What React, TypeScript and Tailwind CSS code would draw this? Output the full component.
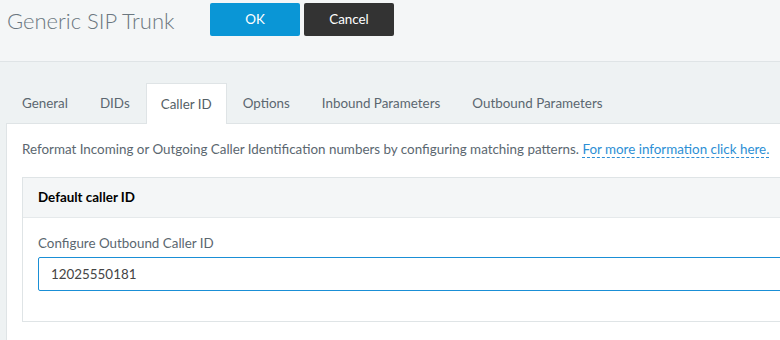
const tabs = ["General", "DIDs", "Caller ID", "Options", "Inbound Parameters", "Outbound Parameters"];

export default function App() {
  return (
    <div className="w-[780px] h-[340px] overflow-hidden bg-[#eef2f3] text-[#5b6770]" style={{ fontFamily: "Lato, 'Open Sans', sans-serif" }}>
      {/* header */}
      <div className="h-[62px] bg-[#f4f6f7] border-b border-[#dfe4e6] flex items-start">
        <h1 className="ml-[7px] mt-[4px] text-[22px] font-light text-[#6b7780] w-[203px] whitespace-nowrap">Generic SIP Trunk</h1>
        <button className="mt-[3px] w-[90px] h-[33px] rounded-[2px] bg-[#0a96d6] text-white text-[13.4px]">OK</button>
        <button className="mt-[3px] ml-[4px] w-[90px] h-[33px] rounded-[2px] bg-[#333333] text-white text-[13.4px]">Cancel</button>
      </div>

      {/* tabs */}
      <div className="pt-[21px] pl-[6px] w-[820px]">
        <div className="flex items-end h-[40px] text-[13.4px]">
          {tabs.map((t) =>
            t === "Caller ID" ? (
              <div key={t} className="h-[41px] -mb-px px-[14px] bg-white border border-b-0 border-[#dfe4e6] flex items-center text-[#555f66] relative z-10">
                {t}
              </div>
            ) : (
              <div key={t} className="h-[40px] px-[16px] flex items-center">
                {t}
              </div>
            )
          )}
        </div>

        {/* content */}
        <div className="bg-white border-l border-t border-[#dfe4e6] h-[260px] pl-[15px] pt-[16px]">
          <p className="text-[13.4px] leading-[18px] whitespace-nowrap">
            Reformat Incoming or Outgoing Caller Identification numbers by configuring matching patterns.{" "}
            <a className="text-[#2d8fd5] border-b border-dashed border-[#2d8fd5]">For more information click here.</a>
          </p>

          <div className="mt-[19px] border border-[#dfe4e6] h-[145px]">
            <div className="h-[40px] bg-[#f4f6f7] border-b border-[#e5e9eb] flex items-center pl-[15px] text-[13.4px] font-bold text-black">
              Default caller ID
            </div>
            <div className="pl-[15px] pt-[16px]">
              <div className="text-[13.4px] leading-[18px]">Configure Outbound Caller ID</div>
              <div className="mt-[5px] h-[34px] border border-[#1a8fd6] rounded-l-[2px] flex items-center pl-[12px] text-[13.4px] text-[#444]">
                12025550181
              </div>
            </div>
          </div>
        </div>
      </div>
    </div>
  );
}
